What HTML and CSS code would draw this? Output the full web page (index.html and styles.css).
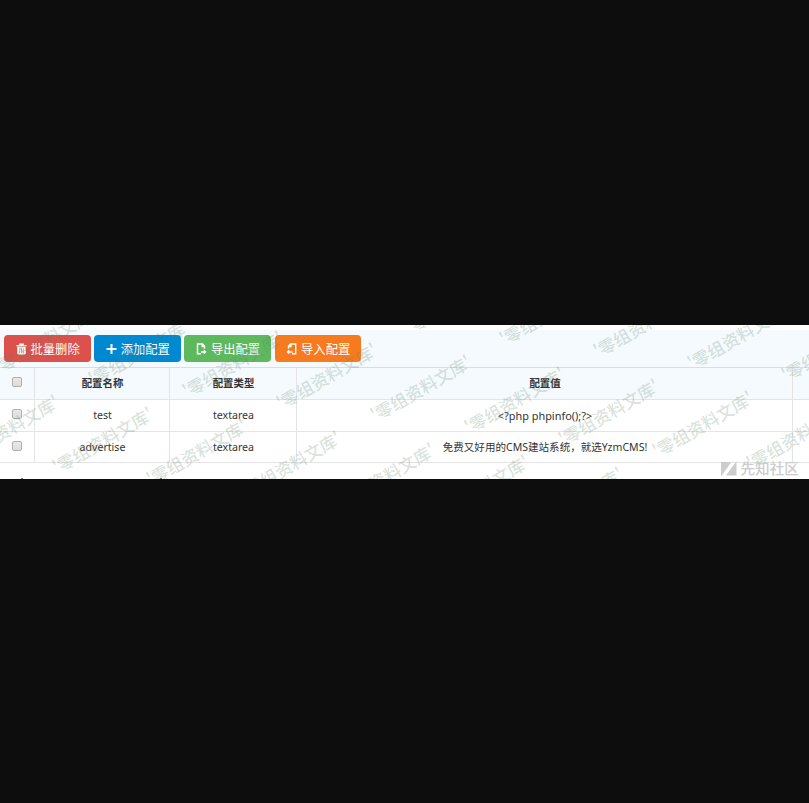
FILE: index.html
```html
<!DOCTYPE html>
<html lang="zh-CN">
<head>
<meta charset="utf-8">
<title>配置</title>
<link rel="stylesheet" href="styles.css">
</head>
<body>
<main class="panel">
  <div class="toolbar">
    <button class="btn red"><svg width="11" height="12" viewBox="0 0 11 12"><path d="M.5 2h2.700V.6h4.600V2h2.700v1.500H.5zM1.300 4h8.400v6.500q0 1-1 1H2.300q-1 0-1-1z" fill="#fff"/><path d="M3.700 5.200v5M5.500 5.200v5M7.300 5.200v5" stroke="#dd514c" stroke-width=".6"/></svg><span>批量删除</span></button>
    <button class="btn blue"><svg width="11" height="12" viewBox="0 0 11 12"><path d="M5.500 1v10M.5 6h10" stroke="#fff" stroke-width="2"/></svg><span>添加配置</span></button>
    <button class="btn green"><svg width="11" height="12" viewBox="0 0 11 12"><path d="M5 10.800H1.500V1H6.500l2 2v2.800M6.200 1v2.500h2.500" fill="none" stroke="#fff" stroke-width="1.400"/><path d="M5 8.200H7.700V6.300l2.800 2.600-2.800 2.500V9.700H5z" fill="#fff"/></svg><span>导出配置</span></button>
    <button class="btn orange"><svg width="11" height="12" viewBox="0 0 11 12"><path d="M6 10.800h3.700V1H4.500l-2 2v2.500M4.800 1v2.500H2.300" fill="none" stroke="#fff" stroke-width="1.400"/><path d="M6.500 8.200H3.300V6.300L.5 8.900l2.800 2.500V9.700h3.200z" fill="#fff"/></svg><span>导入配置</span></button>
  </div>
  <div class="table">
    <div class="row head"><div><i class="check"></i></div><div>配置名称</div><div>配置类型</div><div>配置值</div><div></div></div>
    <div class="row"><div><i class="check"></i></div><div>test</div><div>textarea</div><div class="code">&lt;?php phpinfo();?&gt;</div><div></div></div>
    <div class="row last"><div><i class="check"></i></div><div>advertise</div><div>textarea</div><div class="ad">免费又好用的CMS建站系统，就选YzmCMS!</div><div></div></div>
  </div>
  <div class="cut"><i></i><i></i></div>
  <svg class="watermark" width="809" height="154" viewBox="0 325 809 154">
    <g transform="translate(1.5 0)">
      <text transform="translate(454 300) rotate(-30)">'零组资料文库'</text>
      <text transform="translate(548 312) rotate(-30)">'零组资料文库'</text>
      <text transform="translate(642 324) rotate(-30)">'零组资料文库'</text>
      <text transform="translate(736 336) rotate(-30)">'零组资料文库'</text>
      <text transform="translate(830 348) rotate(-30)">'零组资料文库'</text>
      <text transform="translate(43 340) rotate(-30)">'零组资料文库'</text>
      <text transform="translate(137 352) rotate(-30)">'零组资料文库'</text>
      <text transform="translate(231 364) rotate(-30)">'零组资料文库'</text>
      <text transform="translate(325 376) rotate(-30)">'零组资料文库'</text>
      <text transform="translate(419 388) rotate(-30)">'零组资料文库'</text>
      <text transform="translate(513 400) rotate(-30)">'零组资料文库'</text>
      <text transform="translate(607 412) rotate(-30)">'零组资料文库'</text>
      <text transform="translate(701 424) rotate(-30)">'零组资料文库'</text>
      <text transform="translate(795 436) rotate(-30)">'零组资料文库'</text>
      <text transform="translate(7 428) rotate(-30)">'零组资料文库'</text>
      <text transform="translate(101 440) rotate(-30)">'零组资料文库'</text>
      <text transform="translate(195 452) rotate(-30)">'零组资料文库'</text>
      <text transform="translate(289 464) rotate(-30)">'零组资料文库'</text>
      <text transform="translate(383 476) rotate(-30)">'零组资料文库'</text>
      <text transform="translate(477 488) rotate(-30)">'零组资料文库'</text>
      <text transform="translate(571 500) rotate(-30)">'零组资料文库'</text>
    </g>
  </svg>
  <div class="brand"><svg width="16" height="16" viewBox="0 0 16 16"><path d="M0 1h10.500L0 15.500zM15.500 0v14.500H5z" fill="#ccc"/></svg><span>先知社区</span></div>
</main>
</body>
</html>
```
FILE: styles.css
```css
* { box-sizing: border-box; }
body {
  margin: 0;
  height: 803px;
  padding-top: 325px;
  overflow: hidden;
  background: #0d0d0d;
  font-family: "Noto Sans", "Noto Sans CJK SC", sans-serif;
}
.panel {
  position: relative;
  width: 809px;
  height: 154px;
  padding-top: 5px;
  overflow: hidden;
  background: #fff;
}
.toolbar {
  display: flex;
  gap: 3.7px;
  height: 37px;
  padding: 5px 4px;
  background: #f5fafe;
}
.btn {
  display: flex;
  align-items: center;
  gap: 4px;
  width: 86.5px;
  height: 27px;
  padding: 0 0 0 11.5px;
  border: 0;
  border-radius: 4px;
  color: #fff;
  font: 12.3px/27px "Noto Sans CJK SC", sans-serif;
  white-space: nowrap;
}
.btn svg { flex: none; }
.btn span { padding-top: 1px; }
.red { background: #dd514c; }
.blue { background: #0088d0; }
.green { background: #5eb95e; }
.orange { background: #f67b1f; }
.table { border-top: 1px solid #ddd; }
.row {
  display: grid;
  grid-template-columns: 35px 135px 127px 496px 1fr;
  height: 32px;
  border-bottom: 1px solid #e4e4e4;
  color: #333;
  font-size: 10.6px;
  line-height: 31px;
  text-align: center;
}
.row > div {
  padding-left: 1px;
  border-right: 1px solid #e4e4e4;
  white-space: nowrap;
}
.row > div:last-child { border-right: 0; }
.row > div:first-child { display: flex; padding: 9px 0 0 12px; }
.head {
  background: #f5fafe;
  font: bold 10.4px/30px "Noto Sans CJK SC", sans-serif;
}
.last { height: 31px; }
.check {
  width: 10px;
  height: 10px;
  border: 1px solid #b0b0b0;
  border-radius: 2px;
  background: linear-gradient(#e8e8e8, #dcdcdc);
}
.code { font-size: 10.9px; }
.row .ad { font-size: 10.55px; }
.cut {
  display: flex;
  gap: 137px;
  padding: 15px 0 0 21px;
}
.cut i { width: 2px; height: 1px; background: #777; }
.watermark { position: absolute; left: 0; top: 0; }
.watermark text {
  fill: #5a8264;
  fill-opacity: .24;
  font: 500 17px "Noto Sans CJK SC", sans-serif;
  text-anchor: middle;
  dominant-baseline: central;
}
.brand {
  position: absolute;
  left: 721px;
  top: 135px;
  display: flex;
  align-items: center;
  gap: 3.5px;
  height: 17px;
  color: #ccc;
  font: 500 14.6px/15px "Noto Sans CJK SC", sans-serif;
}
.brand span { padding-bottom: 2px; }
```
